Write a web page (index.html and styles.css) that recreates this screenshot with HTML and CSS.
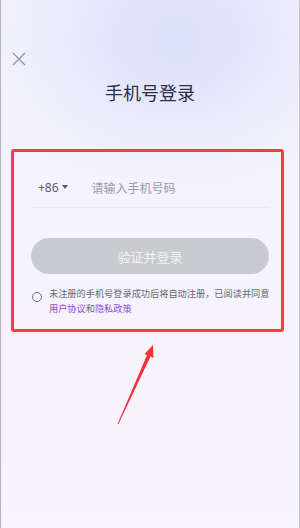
FILE: index.html
```html
<!DOCTYPE html>
<html lang="zh">
<head>
<meta charset="utf-8">
<link rel="stylesheet" href="styles.css">
</head>
<body>
<div class="page">
  <div class="topbar">
    <svg class="close" width="14" height="14" viewBox="0 0 14 14"><path d="M1 1L13 13M13 1L1 13" stroke="#8d909c" stroke-width="1.1" fill="none"/></svg>
  </div>
  <h1 class="title">手机号登录</h1>
  <div class="card">
    <div class="phone-row">
      <span class="code">+86</span>
      <span class="caret"></span>
      <span class="placeholder">请输入手机号码</span>
    </div>
    <div class="btn">验证并登录</div>
    <div class="agree">
      <span class="radio"></span>
      <p class="agree-text">未注册的手机号登录成功后将自动注册，已阅读并同意<br><span class="link">用户协议</span>和<span class="link">隐私政策</span></p>
    </div>
  </div>
  <svg class="arrow" width="300" height="528" viewBox="0 0 300 528"><polygon points="117.5,424 147,355 144.5,354 153,345 153.5,358 150.5,356.5 118.5,424" fill="#f5333a"/></svg>
</div>
</body>
</html>
```
FILE: styles.css
```css
* { box-sizing: border-box; }
html, body { margin: 0; padding: 0; }
body {
  width: 300px;
  height: 528px;
  overflow: hidden;
  font-family: "Noto Sans CJK SC", "Noto Sans", sans-serif;
}
.page {
  position: relative;
  height: 528px;
  border-left: 1px solid #b4b4ba;
  border-right: 1px solid #c4c4ca;
  background:
    radial-gradient(ellipse 190px 150px at 175px 40px, rgba(218, 224, 250, 1) 0%, rgba(226, 229, 250, 0.6) 55%, rgba(240, 240, 252, 0) 100%),
    linear-gradient(180deg, #f2f2fd 0%, #f5f3fd 40%, #f8f3fd 100%);
}
.topbar {
  padding: 52px 0 0 11px;
  height: 65px;
}
.close { display: block; }
.title {
  margin: 15px 0 0;
  font-size: 18px;
  line-height: 24px;
  font-weight: 400;
  text-align: center;
  color: #2b2e48;
}
.card {
  margin: 45px 0 0 10px;
  width: 273px;
  height: 183px;
  border: 3px solid #ff3a3d;
  border-radius: 3px;
  padding: 15px 12px 0 17px;
}
.phone-row {
  display: flex;
  align-items: center;
  height: 41px;
  padding-left: 7px;
  border-bottom: 1px solid #eaeaf0;
}
.code {
  font-size: 12px;
  color: #5a5c6a;
  font-family: "Noto Sans", sans-serif;
}
.caret {
  margin-left: 3px;
  width: 0;
  height: 0;
  border-left: 3.5px solid transparent;
  border-right: 3.5px solid transparent;
  border-top: 4px solid #5a5c6a;
}
.placeholder {
  margin-left: 24px;
  font-size: 12px;
  color: #9a9ba6;
}
.btn {
  margin-top: 30px;
  height: 36px;
  border-radius: 18px;
  background: #c9cbd0;
  color: #f2f2f4;
  font-size: 13px;
  display: flex;
  align-items: center;
  justify-content: center;
}
.agree {
  margin-top: 12px;
  display: flex;
  align-items: flex-start;
}
.radio {
  flex: none;
  margin: 6px 0 0 1px;
  width: 10px;
  height: 10px;
  border: 1.3px solid #6c6e86;
  border-radius: 50%;
}
.agree-text {
  margin: 0 0 0 7px;
  font-size: 9.2px;
  line-height: 14.5px;
  color: #666873;
  white-space: nowrap;
}
.link { color: #9048d2; }
.arrow {
  position: absolute;
  left: -1px;
  top: 0;
  pointer-events: none;
}
```
